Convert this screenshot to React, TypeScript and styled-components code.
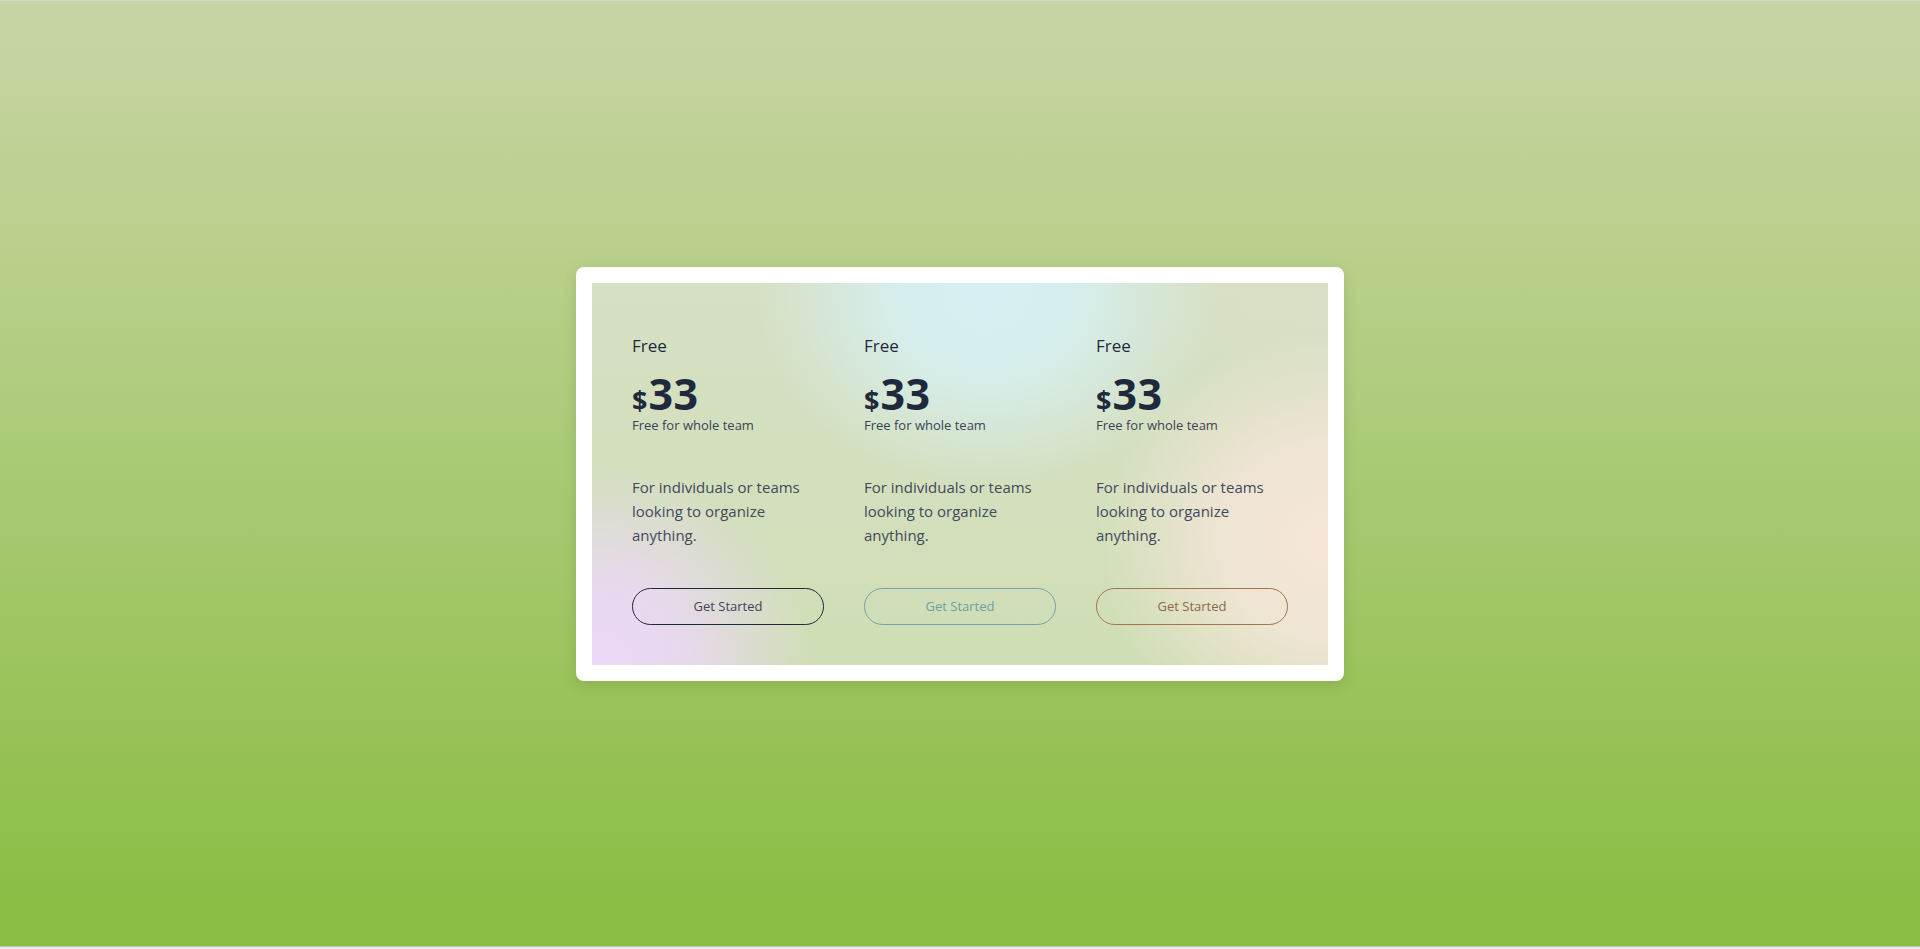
import React from "react";
import styled, { createGlobalStyle } from "styled-components";

const Global = createGlobalStyle`
  html, body { margin: 0; padding: 0; }
  body {
    background: #efe6ec;
    font-family: "Open Sans", "Noto Sans", sans-serif;
  }
  * { box-sizing: border-box; }
`;

const Page = styled.div`
  height: 947px;
  border-top: 1px solid #d3d6cc;
  border-bottom: 1px solid #c2c6bc;
  background: linear-gradient(180deg, #c8d4a4 0%, #b7cf88 30%, #a6c86f 55%, #96c256 78%, #87bd41 100%);
  display: flex;
  align-items: center;
  justify-content: center;
`;

const Card = styled.div`
  background: #ffffff;
  padding: 16px;
  border-radius: 8px;
  box-shadow: 0 4px 14px rgba(60, 90, 20, 0.18);
`;

const Panel = styled.div`
  width: 736px;
  height: 382px;
  padding: 51px 40px 40px;
  display: grid;
  grid-template-columns: repeat(3, 192px);
  column-gap: 40px;
  background:
    radial-gradient(ellipse 230px 190px at 395px 15px, rgba(214, 240, 242, 1) 0%, rgba(214, 240, 242, 0.85) 40%, rgba(214, 240, 242, 0) 100%),
    radial-gradient(ellipse 215px 200px at 5px 382px, rgba(236, 216, 248, 1) 0%, rgba(236, 216, 248, 0.85) 40%, rgba(236, 216, 248, 0) 100%),
    radial-gradient(ellipse 230px 210px at 736px 260px, rgba(246, 230, 218, 1) 0%, rgba(246, 230, 218, 0.8) 45%, rgba(246, 230, 218, 0) 100%),
    radial-gradient(ellipse 200px 130px at 736px 0px, rgba(218, 224, 198, 1) 0%, rgba(218, 224, 198, 0) 100%),
    linear-gradient(180deg, #d6e0c4 0%, #d3dfbc 60%, #cfdeb4 100%);
`;

const Column = styled.div`
  display: flex;
  flex-direction: column;
`;

const Label = styled.div`
  font-size: 17px;
  font-weight: 500;
  line-height: 24px;
  color: #1f2a3c;
`;

const PriceRow = styled.div`
  display: flex;
  align-items: baseline;
  margin-top: 16px;
  color: #1e293b;
  font-weight: 700;
  line-height: 40px;
  height: 40px;
`;

const Currency = styled.span`
  font-size: 27px;
  margin-right: 1px;
`;

const Amount = styled.span`
  font-size: 43px;
  letter-spacing: 0.5px;
`;

const Sub = styled.div`
  font-size: 13px;
  line-height: 16px;
  color: #3b4454;
  margin-top: 3px;
`;

const Desc = styled.p`
  margin: 42px 0 0;
  font-size: 15px;
  line-height: 24px;
  color: #414a5a;
`;

const Button = styled.button<{ $tone: string; $text: string }>`
  margin-top: 41px;
  height: 37px;
  width: 192px;
  border-radius: 999px;
  border: 1px solid ${(p) => p.$tone};
  background: transparent;
  color: ${(p) => p.$text};
  font-family: "Open Sans", "Noto Sans", sans-serif;
  font-size: 13px;
  cursor: pointer;
`;

const plans = [
  { tone: "#1e293b", text: "#3d4556" },
  { tone: "#74a3ab", text: "#6e9ea4" },
  { tone: "#a17550", text: "#8a6a48" },
];

export default function App() {
  return (
    <>
      <Global />
      <Page>
        <Card>
          <Panel>
            {plans.map((p, i) => (
              <Column key={i}>
                <Label>Free</Label>
                <PriceRow>
                  <Currency>$</Currency>
                  <Amount>33</Amount>
                </PriceRow>
                <Sub>Free for whole team</Sub>
                <Desc>For individuals or teams looking to organize anything.</Desc>
                <Button $tone={p.tone} $text={p.text}>Get Started</Button>
              </Column>
            ))}
          </Panel>
        </Card>
      </Page>
    </>
  );
}
